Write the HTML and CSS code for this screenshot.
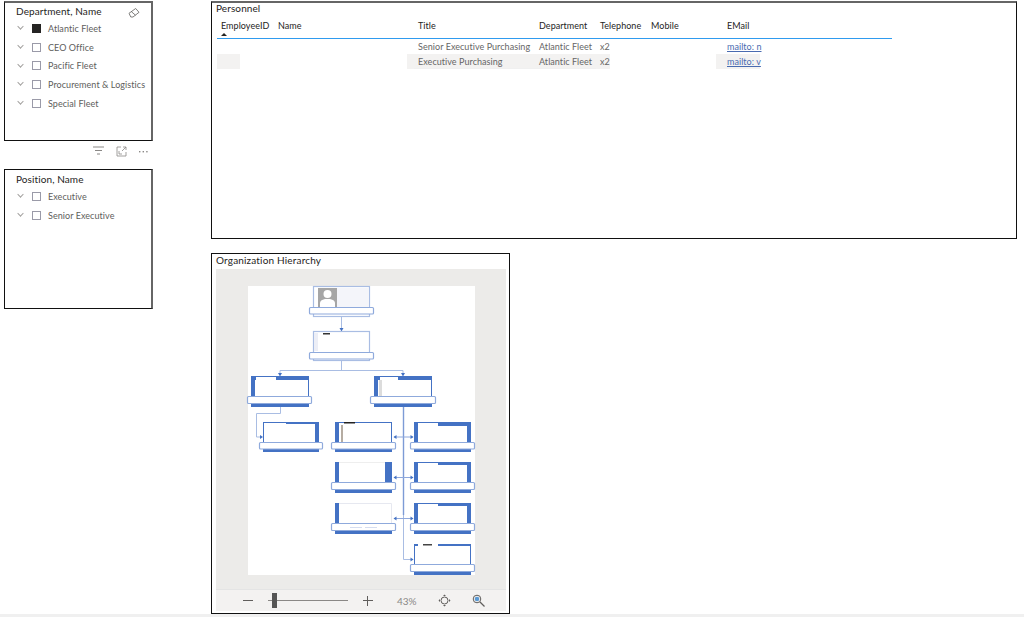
FILE: index.html
```html
<!DOCTYPE html>
<html lang="en">
<head>
  <meta charset="UTF-8" />
  <title>Personnel report</title>
  <link rel="stylesheet" href="styles.css">
</head>
<body>

  <main class="canvas">

    <div class="side">
      <section class="visual slicer slicer-dept">
        <div class="slicer-head">
          <h2 class="visual-title">Department, Name</h2>
          <svg class="eraser" width="12" height="10" viewBox="0 0 12 10" fill="none" stroke="#605e5c" stroke-width="0.8">
            <path d="M1 5.300L7.700 0.500L11 4.300L5 9H2.800ZM3.300 3.600L7.500 7.200"/>
          </svg>
        </div>
        <ul class="slicer-list">
          <li><span class="chev"></span><span class="check check-on"></span>Atlantic Fleet</li>
          <li><span class="chev"></span><span class="check"></span>CEO Office</li>
          <li><span class="chev"></span><span class="check"></span>Pacific Fleet</li>
          <li><span class="chev"></span><span class="check"></span>Procurement &amp; Logistics</li>
          <li><span class="chev"></span><span class="check"></span>Special Fleet</li>
        </ul>
      </section>

      <div class="visual-tools">
        <svg width="11" height="9" viewBox="0 0 11 9" stroke="#8a8886" stroke-width="1" fill="none"><path d="M0 1H11M2 4.500H9M4 8H7"/></svg>
        <svg width="11" height="11" viewBox="0 0 11 11" stroke="#8a8886" stroke-width="0.8" fill="none"><path d="M5 1H1V10H10V6M7 1H10V4M10 1L6 5M3 5V8H6"/></svg>
        <svg width="9" height="3" viewBox="0 0 9 3" fill="#8a8886"><rect y="1" width="1.400" height="1.400"/><rect x="3.600" y="1" width="1.400" height="1.400"/><rect x="7.200" y="1" width="1.400" height="1.400"/></svg>
      </div>

      <section class="visual slicer slicer-pos">
        <div class="slicer-head">
          <h2 class="visual-title">Position, Name</h2>
        </div>
        <ul class="slicer-list">
          <li><span class="chev"></span><span class="check"></span>Executive</li>
          <li><span class="chev"></span><span class="check"></span>Senior Executive</li>
        </ul>
      </section>
    </div>

    <div class="reports">
      <section class="visual personnel">
        <h2 class="visual-title">Personnel</h2>
        <div class="table">
          <div class="row row-head">
            <div class="cell sorted">EmployeeID</div>
            <div class="cell">Name</div>
            <div class="cell">Title</div>
            <div class="cell">Department</div>
            <div class="cell">Telephone</div>
            <div class="cell">Mobile</div>
            <div class="cell">EMail</div>
          </div>
          <div class="row">
            <div class="cell"></div>
            <div class="cell"></div>
            <div class="cell">Senior Executive Purchasing</div>
            <div class="cell">Atlantic Fleet</div>
            <div class="cell">x2</div>
            <div class="cell"></div>
            <div class="cell"><a class="mail" href="#">mailto: n</a></div>
          </div>
          <div class="row row-alt">
            <div class="cell cell-id"></div>
            <div class="cell cell-name"></div>
            <div class="cell">Executive Purchasing</div>
            <div class="cell">Atlantic Fleet</div>
            <div class="cell cell-tel">x2</div>
            <div class="cell cell-mobile"></div>
            <div class="cell cell-mail"><a class="mail" href="#">mailto: v</a></div>
          </div>
        </div>
      </section>

      <section class="visual hierarchy">
        <h2 class="visual-title">Organization Hierarchy</h2>
        <div class="viewer">
          <svg class="chart" width="290" height="321" viewBox="216 269 290 321">
            <rect x="248" y="286" width="227" height="289" fill="#fff"/>

            <!-- connectors -->
            <g fill="none" stroke="#a9bde3" stroke-width="1">
              <path d="M341.500 317V330M341.500 361V370.500M280 370.500H403M280 370.500V375M403 370.500V375"/>
              <path d="M280.500 407V413.500H256.500V437H261"/>
              <path d="M403.500 515V559.500H413"/>
            </g>
            <path d="M403.500 407V515" stroke="#7d9bd6" stroke-width="1.400"/>
            <path d="M394 437H413M394 477.500H413M394 518.500H413" stroke="#8fa8dc" stroke-width="1"/>
            <g fill="#4472c4">
              <path d="M339.500 328H343.500L341.500 331.500ZM278 373H282L280 376.500ZM401 373H405L403 376.500Z"/>
              <path d="M260 435L263 437L260 439ZM410.500 435L413.500 437L410.500 439ZM396.500 435L393.500 437L396.500 439Z"/>
              <path d="M410.500 475.500L413.500 477.500L410.500 479.500ZM396.500 475.500L393.500 477.500L396.500 479.500Z"/>
              <path d="M410.500 516.500L413.500 518.500L410.500 520.500ZM396.500 516.500L393.500 518.500L396.500 520.500Z"/>
              <path d="M410.500 557.500L413.500 559.500L410.500 561.500Z"/>
            </g>

            <!-- top nodes -->
            <g fill="#fff" stroke="#a9bde3" stroke-width="1.200">
              <rect x="313.500" y="286.500" width="56" height="30"/>
              <rect x="313.500" y="331.500" width="56" height="29"/>
            </g>
            <rect x="325" y="288" width="44" height="19" fill="#f4f5fa"/>
            <rect x="318" y="288" width="19" height="19" fill="#a6a6a6"/>
            <circle cx="327.500" cy="294" r="4" fill="#fff"/>
            <path d="M320 307V303Q320 300 325 299H330Q335 300 335 303V307Z" fill="#fff"/>
            <rect x="314" y="333" width="4" height="18" fill="#eceef6"/>
            <rect x="323" y="333" width="7" height="1.500" fill="#333"/>

            <!-- wide nodes: body -->
            <g fill="#4472c4">
              <rect x="251" y="376" width="58" height="31"/>
              <rect x="374" y="376" width="58" height="31"/>
              <rect x="263" y="422" width="56" height="30"/>
              <rect x="335" y="422" width="57" height="30"/>
              <rect x="414" y="422" width="57" height="30"/>
              <rect x="335" y="462" width="57" height="31"/>
              <rect x="414" y="462" width="57" height="31"/>
              <rect x="335" y="503" width="57" height="31"/>
              <rect x="414" y="503" width="57" height="31"/>
              <rect x="414" y="544" width="57" height="31"/>
            </g>
            <!-- wide nodes: inner white -->
            <g fill="#fff">
              <rect x="255" y="380" width="53" height="17"/><rect x="256" y="377" width="20" height="3"/>
              <rect x="378" y="380" width="53" height="17"/><rect x="380" y="377" width="18" height="3"/>
              <rect x="264" y="424" width="51" height="19"/><rect x="264" y="423" width="22" height="1"/>
              <rect x="339" y="423" width="52" height="20"/>
              <rect x="418" y="426" width="49" height="17"/><rect x="418" y="423" width="20" height="3"/>
              <rect x="339" y="462" width="46" height="21"/>
              <rect x="418" y="465" width="49" height="18"/><rect x="418" y="463" width="20" height="2"/>
              <rect x="339" y="503" width="53" height="21"/>
              <rect x="418" y="506" width="49" height="18"/><rect x="418" y="504" width="20" height="2"/>
              <rect x="415" y="546" width="55" height="19"/><rect x="418" y="544" width="20" height="2"/>
            </g>
            <rect x="341" y="425" width="2" height="17" fill="#b5aca2"/>
            <rect x="344" y="422" width="11" height="1.500" fill="#222"/>
            <rect x="379" y="380" width="3" height="17" fill="#dcdcdc"/>
            <rect x="423" y="544" width="9" height="1.500" fill="#444"/>
            <path d="M339 503.500H391.500V524" fill="none" stroke="#e6e8f0" stroke-width="1"/>
            <path d="M339 462.500H385" fill="none" stroke="#eeeeee" stroke-width="1"/>

            <!-- wide nodes: name bar -->
            <g fill="#fff" stroke="#8faadc" stroke-width="1.200">
              <rect x="309.500" y="307.500" width="64" height="6.500" rx="1"/>
              <rect x="309.500" y="352.500" width="64" height="6.500" rx="1"/>
              <rect x="247.500" y="396.500" width="64" height="7" rx="1"/>
              <rect x="370.500" y="396.500" width="65" height="7" rx="1"/>
              <rect x="259.500" y="442.500" width="63" height="6.500" rx="1"/>
              <rect x="331.500" y="442.500" width="64" height="6.500" rx="1"/>
              <rect x="410.500" y="442.500" width="64" height="6.500" rx="1"/>
              <rect x="331.500" y="482.500" width="64" height="7" rx="1"/>
              <rect x="410.500" y="482.500" width="64" height="7" rx="1"/>
              <rect x="331.500" y="523.500" width="64" height="7" rx="1"/>
              <rect x="410.500" y="523.500" width="64" height="7" rx="1"/>
              <rect x="410.500" y="564.500" width="64" height="7" rx="1"/>
            </g>
            <path d="M350 527.500H362M365 527.500H377" stroke="#d5ddf0" stroke-width="1"/>
          </svg>
        </div>
        <div class="zoombar">
          <span class="zoom-btn zoom-minus"></span>
          <div class="zoom-track"><span class="zoom-thumb"></span></div>
          <span class="zoom-btn zoom-plus"></span>
          <span class="zoom-pct">43%</span>
          <svg class="zoom-center" width="13" height="13" viewBox="0 0 13 13" fill="none" stroke="#605e5c" stroke-width="1">
            <circle cx="6.500" cy="6.500" r="3.500"/>
            <path d="M6.500 0.500L5 2H8ZM6.500 12.500L5 11H8ZM0.500 6.500L2 5V8ZM12.500 6.500L11 5V8Z" fill="#605e5c" stroke="none"/>
          </svg>
          <svg class="zoom-fit" width="13" height="13" viewBox="0 0 13 13" fill="none">
            <circle cx="5" cy="5" r="3.800" stroke="#605e5c" stroke-width="1"/>
            <circle cx="5" cy="5" r="2.300" fill="#5b9bd5"/>
            <path d="M8 8L12.500 12.500" stroke="#605e5c" stroke-width="1.200"/>
          </svg>
        </div>
      </section>
    </div>

  </main>

  <footer class="page-foot"></footer>

</body>
</html>
```

FILE: styles.css
```css
html, body {
  height: 100%;
}

body {
  margin: 0;
  display: flex;
  flex-direction: column;
  overflow: hidden;
  background: #fff;
  color: #252423;
  font-family: 'Lato', 'Noto Sans', sans-serif;
}

.canvas {
  flex: 1;
  display: flex;
  gap: 58px;
  padding: 1px 0 0 4px;
  min-height: 0;
}

.page-foot {
  height: 3px;
  background: #f0f0f0;
}

.side {
  width: 149px;
  display: flex;
  flex-direction: column;
}

.reports {
  width: 806px;
  display: flex;
  flex-direction: column;
  gap: 14px;
}

.visual {
  box-sizing: border-box;
  background: #fff;
  border: 1px solid #111;
}

.visual-title {
  margin: 0;
  font-size: 10px;
  font-weight: 400;
  letter-spacing: 0.1px;
  line-height: 12px;
}

.hierarchy .visual-title {
  letter-spacing: 0.17px;
}

/* slicers */

.slicer {
  padding: 0 0 0 11px;
  border-right: 2px solid #666;
}

.slicer-dept {
  height: 140px;
  border-top: 2px solid #666;
}

.slicer-dept .slicer-head {
  height: 16px;
  padding-top: 0;
}

.slicer-pos {
  height: 140px;
}

.slicer-head {
  box-sizing: border-box;
  display: flex;
  justify-content: space-between;
  align-items: center;
  height: 17px;
  padding: 1px 11px 0 0;
}

.slicer-list {
  list-style: none;
  margin: 0;
  padding: 0;
}

.slicer-list li {
  display: flex;
  align-items: center;
  height: 18.7px;
  font-size: 9px;
  letter-spacing: 0.06px;
  color: #605e5c;
  white-space: nowrap;
}

.chev {
  width: 4px;
  height: 4px;
  margin: -3px 9px 0 2px;
  border-right: 1px solid #a19f9d;
  border-bottom: 1px solid #a19f9d;
  transform: rotate(45deg) scale(0.9);
}

.check {
  box-sizing: border-box;
  width: 9px;
  height: 9px;
  margin-right: 7px;
  border: 1px solid #9a9aa8;
}

.check-on {
  background: #252423;
  border-color: #252423;
}

.eraser {
  margin-top: 3px;
}

.visual-tools {
  box-sizing: border-box;
  height: 28px;
  display: flex;
  align-items: flex-start;
  justify-content: flex-end;
  gap: 12px;
  padding: 5px 5px 0 0;
}

.visual-tools svg:last-child {
  margin-top: 4px;
}

/* personnel table */

.personnel {
  height: 238px;
  padding: 0 0 0 4px;
  border-top: 2px solid #666;
}

.personnel .visual-title {
  line-height: 10px;
}

.table {
  width: 675px;
  margin-left: 1px;
  font-size: 9px;
  letter-spacing: 0.05px;
  color: #666;
}

.row {
  display: grid;
  grid-template-columns: 57px 140px 121px 61px 51px 76px 1fr;
  height: 15px;
  line-height: 15px;
}

.row-head {
  box-sizing: border-box;
  height: 20px;
  margin-top: 6px;
  line-height: 14px;
  border-bottom: 1px solid #2f9bef;
  color: #252423;
}

.row-alt {
  height: 14px;
  background: #f3f2f1;
  border-bottom: 1px solid #f0f0f0;
}

.cell {
  padding-left: 4px;
  min-width: 0;
  white-space: nowrap;
}

.sorted {
  position: relative;
}

.sorted::after {
  content: "";
  position: absolute;
  left: 4px;
  top: 14px;
  border: 3px solid transparent;
  border-top: 0;
  border-bottom: 3px solid #252423;
}

.mail {
  color: #4a6bb0;
  text-decoration: underline;
}

/* redacted cells are left white on the grey row */
.cell-id {
  background: linear-gradient(to right, #f3f2f1 23px, #fff 23px);
}

.cell-name {
  background: linear-gradient(to right, #fff 133px, #f3f2f1 133px);
}

.cell-tel {
  background: linear-gradient(to right, #f3f2f1 14px, #fff 14px);
}

.cell-mobile {
  background: linear-gradient(to right, #fff 69px, #f3f2f1 69px);
}

.cell-mail {
  background: linear-gradient(to right, #f3f2f1 37px, #fff 37px);
}

/* hierarchy */

.hierarchy {
  width: 299px;
  height: 361px;
  padding: 0 3px 2px 4px;
  display: flex;
  flex-direction: column;
}

.hierarchy .visual-title {
  height: 15px;
  line-height: 13px;
  flex: none;
}

.viewer {
  flex: 1;
  background: #ecebe9;
  min-height: 0;
}

.chart {
  display: block;
}

.zoombar {
  height: 21px;
  flex: none;
  display: flex;
  align-items: center;
  background: #f3f2f1;
  border-top: 1px solid #e4e4e4;
  padding-left: 27px;
  font-size: 10px;
  color: #8a8886;
}

.zoom-btn {
  position: relative;
  width: 10px;
  height: 10px;
}

.zoom-btn::before {
  content: "";
  position: absolute;
  left: 0;
  right: 0;
  top: 4px;
  height: 1px;
  background: #605e5c;
}

.zoom-plus::after {
  content: "";
  position: absolute;
  left: 4px;
  top: 0;
  bottom: 0;
  width: 1px;
  background: #605e5c;
}

.zoom-track {
  position: relative;
  width: 80px;
  height: 1px;
  margin: 0 15px;
  background: #8a8886;
}

.zoom-thumb {
  position: absolute;
  left: 4px;
  top: -7px;
  width: 5px;
  height: 15px;
  background: #555;
}

.zoom-pct {
  margin-left: 24px;
  width: 20px;
}

.zoom-center {
  margin-left: 21px;
}

.zoom-fit {
  margin-left: 21px;
}
```
